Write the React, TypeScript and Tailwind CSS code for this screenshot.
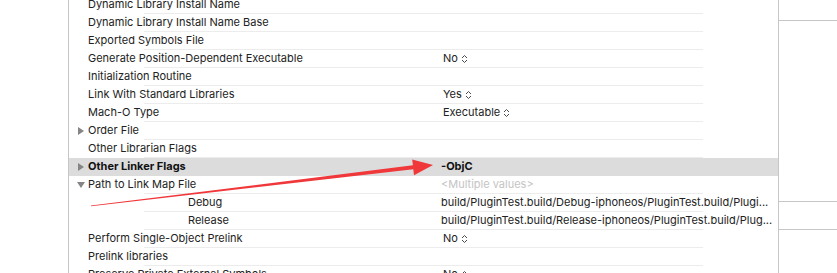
import React from "react";

type Row = {
  label: string;
  value?: string;
  popup?: boolean;
  bold?: boolean;
  muted?: boolean;
  sub?: boolean;
  tri?: "right" | "down";
  selected?: boolean;
};

const rows: Row[] = [
  { label: "Dynamic Library Install Name" },
  { label: "Dynamic Library Install Name Base" },
  { label: "Exported Symbols File" },
  { label: "Generate Position-Dependent Executable", value: "No", popup: true },
  { label: "Initialization Routine" },
  { label: "Link With Standard Libraries", value: "Yes", popup: true },
  { label: "Mach-O Type", value: "Executable", popup: true },
  { label: "Order File", tri: "right" },
  { label: "Other Librarian Flags" },
  { label: "Other Linker Flags", value: "-ObjC", bold: true, tri: "right", selected: true },
  { label: "Path to Link Map File", value: "<Multiple values>", muted: true, tri: "down" },
  { label: "Debug", value: "build/PluginTest.build/Debug-iphoneos/PluginTest.build/Plugi...", sub: true },
  { label: "Release", value: "build/PluginTest.build/Release-iphoneos/PluginTest.build/Plug...", sub: true },
  { label: "Perform Single-Object Prelink", value: "No", popup: true },
  { label: "Prelink libraries" },
  { label: "Preserve Private External Symbols", value: "No", popup: true },
];

function Stepper() {
  return (
    <svg width="7" height="10" viewBox="0 0 7 10" className="ml-[3px] shrink-0">
      <path d="M1 4 L3.5 1.5 L6 4 M1 6 L3.5 8.5 L6 6" fill="none" stroke="#4a4a4a" strokeWidth="1" />
    </svg>
  );
}

function Triangle({ dir }: { dir: "right" | "down" }) {
  return (
    <svg width="8" height="8" viewBox="0 0 8 8" className="absolute left-[8px] top-[5px]">
      {dir === "right" ? (
        <path d="M1 0 L7 4 L1 8 Z" fill="#858585" />
      ) : (
        <path d="M0 1 L8 1 L4 7 Z" fill="#858585" />
      )}
    </svg>
  );
}

function SettingRow({ row }: { row: Row }) {
  return (
    <div className={`relative h-[18px] flex flex-col ${row.selected ? "bg-[#dcdcdc]" : ""}`}>
      <div className="h-[17px] flex items-center">
        {row.tri && <Triangle dir={row.tri} />}
        <div
          className={`w-[372px] shrink-0 whitespace-nowrap ${row.sub ? "pl-[119px]" : "pl-[19px]"} ${
            row.bold ? "font-bold text-[#111]" : ""
          }`}
        >
          {row.label}
        </div>
        {row.value && (
          <div
            className={`flex items-center whitespace-nowrap ${row.popup ? "pl-[2px]" : ""} ${
              row.bold ? "font-bold text-[#111]" : ""
            } ${row.muted ? "text-[#c4c4c4]" : ""}`}
          >
            {row.value}
            {row.popup && <Stepper />}
          </div>
        )}
      </div>
      <div className={`h-px ml-[75px] w-[559px] ${row.selected ? "" : "bg-[#ececec]"}`} />
    </div>
  );
}

export default function App() {
  return (
    <div className="relative w-[837px] h-[273px] overflow-hidden bg-white text-[11px] text-[#222] font-['Inter','Liberation_Sans',sans-serif]">
      <div className="flex h-full">
        <div className="w-[69px] shrink-0 border-r border-[#c6c6c6]" />
        <div className="w-[709px] shrink-0 -mt-[4px]">
          {rows.map((r) => (
            <SettingRow key={r.label} row={r} />
          ))}
        </div>
        <div className="flex-1 border-l border-[#c6c6c6] flex flex-col">
          <div className="h-[21px] border-b border-[#c6c6c6]" />
          <div className="h-[180px]" />
          <div className="h-[29px] border-t border-b border-[#c6c6c6]" />
        </div>
      </div>
      <svg className="absolute left-0 top-0 pointer-events-none" width="837" height="273">
        <polygon
          points="91,205.5 412.9,165.3 412.2,159.4 433,165 414,175.2 413.3,169.3 91,206.3"
          fill="#f0373a"
        />
      </svg>
    </div>
  );
}
